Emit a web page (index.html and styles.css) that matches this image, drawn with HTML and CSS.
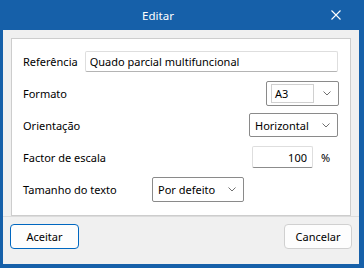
FILE: index.html
```html
<!DOCTYPE html>
<html lang="pt">
<head>
  <meta charset="UTF-8">
  <meta name="viewport" content="width=device-width, initial-scale=1.0">
  <title>Editar</title>
  <link rel="stylesheet" href="styles.css">
</head>
<body>

  <div class="window">
    <div class="titlebar">
      <span class="title">Editar</span>
      <div class="close">
        <svg width="10" height="10" viewBox="0 0 10 10">
          <path d="M0.5 0.5 L9.5 9.5 M9.5 0.5 L0.5 9.5" stroke="#fff" stroke-width="1.1" fill="none"/>
        </svg>
      </div>
    </div>

    <div class="client">
      <div class="panel">
        <div class="row">
          <label class="lbl lbl-ref">Referência</label>
          <input class="field field-ref" type="text" value="Quado parcial multifuncional">
        </div>

        <div class="row">
          <label class="lbl">Formato</label>
          <div class="combo combo-formato">
            <div class="combo-edit">A3</div>
            <svg class="chev" width="8" height="5" viewBox="0 0 8 5"><path d="M0.5 0.5 L4 4 L7.5 0.5" stroke="#707070" fill="none"/></svg>
          </div>
        </div>

        <div class="row">
          <label class="lbl">Orientação</label>
          <div class="combo combo-orient">
            <span class="combo-text">Horizontal</span>
            <svg class="chev" width="8" height="5" viewBox="0 0 8 5"><path d="M0.5 0.5 L4 4 L7.5 0.5" stroke="#707070" fill="none"/></svg>
          </div>
        </div>

        <div class="row">
          <label class="lbl">Factor de escala</label>
          <input class="field field-num" type="text" value="100">
          <span class="unit">%</span>
        </div>

        <div class="row">
          <label class="lbl lbl-size">Tamanho do texto</label>
          <div class="combo combo-size">
            <span class="combo-text">Por defeito</span>
            <svg class="chev" width="8" height="5" viewBox="0 0 8 5"><path d="M0.5 0.5 L4 4 L7.5 0.5" stroke="#707070" fill="none"/></svg>
          </div>
        </div>
      </div>

      <div class="footer">
        <button class="btn btn-default">Aceitar</button>
        <button class="btn">Cancelar</button>
      </div>
    </div>
  </div>

</body>
</html>
```

FILE: styles.css
```css
body {
  margin: 0;
  font-family: 'Noto Sans', 'Open Sans', sans-serif;
  font-size: 11px;
  color: #000;
}

.window {
  width: 364px;
  height: 268px;
  background-color: #1660a9;
  padding: 0 5px 4px 3px;
  box-sizing: border-box;
  display: flex;
  flex-direction: column;
}

.titlebar {
  height: 30px;
  display: flex;
  align-items: center;
  color: #fff;
  flex-shrink: 0;
}

.title {
  flex: 1;
  text-align: center;
  font-size: 11.5px;
}

.close {
  width: 46px;
  height: 30px;
  display: flex;
  align-items: center;
  justify-content: center;
}

.client {
  flex: 1;
  background-color: #f0f0f0;
  display: flex;
  flex-direction: column;
}

.panel {
  margin: 8px 8px 0;
  height: 178px;
  box-sizing: border-box;
  border: 1px solid #cdcdcd;
  background-color: #fff;
  padding: 9px 12px 0 11px;
  display: flex;
  flex-direction: column;
  gap: 6px;
}

.row {
  height: 26px;
  display: flex;
  align-items: center;
}

.lbl {
  flex: 1;
  white-space: nowrap;
}

.lbl-ref {
  flex: none;
  margin-right: 7px;
}

.lbl-size {
  flex: none;
  width: 129px;
}

.field {
  font-family: inherit;
  font-size: 11px;
  color: #000;
  height: 21px;
  box-sizing: border-box;
  border: 1px solid #dedede;
  border-bottom-color: #b4b4b4;
  border-radius: 2px;
  padding: 0 4px;
  outline: none;
  background: #fff;
}

.field-ref {
  flex: 1;
  min-width: 0;
}

.field-num {
  width: 61px;
  height: 22px;
  text-align: right;
  padding-right: 5px;
  border-bottom-color: #8c8c8c;
}

.unit {
  width: 17px;
  margin-left: 8px;
  text-align: left;
}

.combo {
  height: 25px;
  box-sizing: border-box;
  border: 1px solid #8a8a8a;
  border-radius: 2px;
  background: #fff;
  display: flex;
  align-items: center;
  padding: 0 7px 0 5px;
}

.combo-text {
  flex: 1;
}

.chev {
  flex: none;
}

.combo-formato {
  width: 73px;
  padding-left: 4px;
  margin-right: -1px;
}

.combo-edit {
  width: 48px;
  height: 19px;
  box-sizing: border-box;
  border: 1px solid #d0d0d0;
  padding: 0 3px;
  line-height: 17px;
  margin-right: 9px;
}

.combo-orient {
  width: 89px;
  height: 24px;
}

.combo-size {
  width: 92px;
}

.footer {
  flex: 1;
  border-top: 1px solid #dcdcdc;
  padding: 7px;
  display: flex;
  justify-content: space-between;
  align-items: flex-start;
}

.btn {
  font-family: inherit;
  font-size: 11px;
  color: #000;
  height: 25px;
  width: 68px;
  background-color: #fdfdfd;
  border: 1px solid #d0d0d0;
  border-radius: 4px;
  padding: 0;
}

.btn-default {
  width: 69px;
  border-color: #0067c0;
}
```
